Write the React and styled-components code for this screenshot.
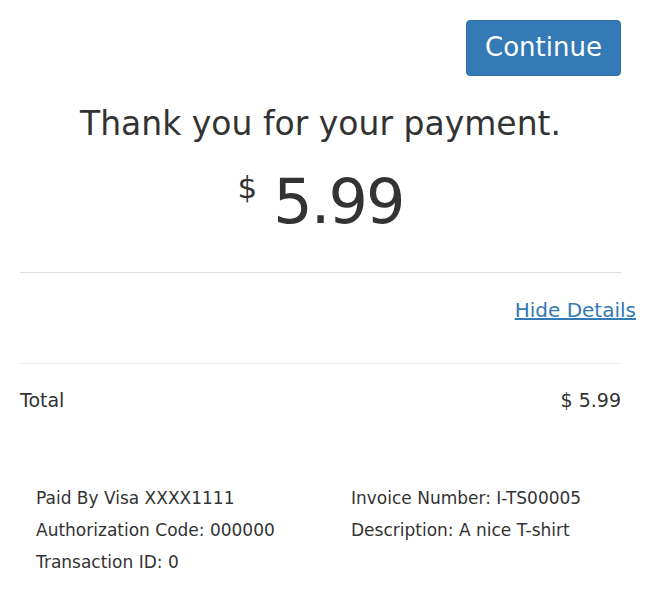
import React from "react";
import styled, { createGlobalStyle } from "styled-components";

const GlobalStyle = createGlobalStyle`
  body {
    margin: 0;
    background: #fff;
    font-family: "DejaVu Sans", "Liberation Sans", sans-serif;
    color: #333;
  }
`;

const Page = styled.div`
  width: 601px;
  padding: 20px 0 0 20px;
`;

const TopBar = styled.div`
  display: flex;
  justify-content: flex-end;
`;

const Button = styled.button`
  width: 155px;
  height: 56px;
  padding: 0 0 3px;
  background: #337ab7;
  border: 1px solid #2e6da4;
  border-radius: 4px;
  color: #fff;
  font-family: inherit;
  font-size: 26px;
  cursor: pointer;
`;

const Heading = styled.h1`
  margin: 26px 0 0;
  text-align: center;
  font-weight: normal;
  font-size: 33px;
  line-height: 44px;
  color: #333;
`;

const Amount = styled.div`
  display: flex;
  justify-content: center;
  align-items: flex-start;
  gap: 16px;
  margin: 16px 0 30px;
  height: 80px;
`;

const Currency = styled.span`
  padding-top: 5px;
  font-size: 31px;
  line-height: 40px;
`;

const Value = styled.span`
  font-size: 62px;
  line-height: 80px;
  letter-spacing: -2px;
`;

const Divider = styled.hr`
  margin: 0;
  border: 0;
  border-top: 1px solid ${(p) => p.color};
`;

const LinkRow = styled.div`
  display: flex;
  justify-content: flex-end;
  margin-right: -15px;
  padding: 25px 0 0;
  height: 65px;
`;

const Link = styled.a`
  color: #337ab7;
  font-size: 20px;
  text-decoration: underline;
`;

const TotalRow = styled.div`
  display: flex;
  justify-content: space-between;
  padding-top: 25px;
  font-size: 19px;
  height: 49px;
`;

const Details = styled.div`
  display: grid;
  grid-template-columns: 315px 1fr;
  padding: 44px 0 0 16px;
  font-size: 17px;
  line-height: 32px;
`;

const Col = styled.div`
  display: flex;
  flex-direction: column;
`;

export default function App() {
  return (
    <>
      <GlobalStyle />
      <Page>
        <TopBar>
          <Button>Continue</Button>
        </TopBar>
        <Heading>Thank you for your payment.</Heading>
        <Amount>
          <Currency>$</Currency>
          <Value>5.99</Value>
        </Amount>
        <Divider color="#ddd" />
        <LinkRow>
          <Link href="#">Hide Details</Link>
        </LinkRow>
        <Divider color="#eee" />
        <TotalRow>
          <span>Total</span>
          <span>$ 5.99</span>
        </TotalRow>
        <Details>
          <Col>
            <span>Paid By Visa XXXX1111</span>
            <span>Authorization Code: 000000</span>
            <span>Transaction ID: 0</span>
          </Col>
          <Col>
            <span>Invoice Number: I-TS00005</span>
            <span>Description: A nice T-shirt</span>
          </Col>
        </Details>
      </Page>
    </>
  );
}
